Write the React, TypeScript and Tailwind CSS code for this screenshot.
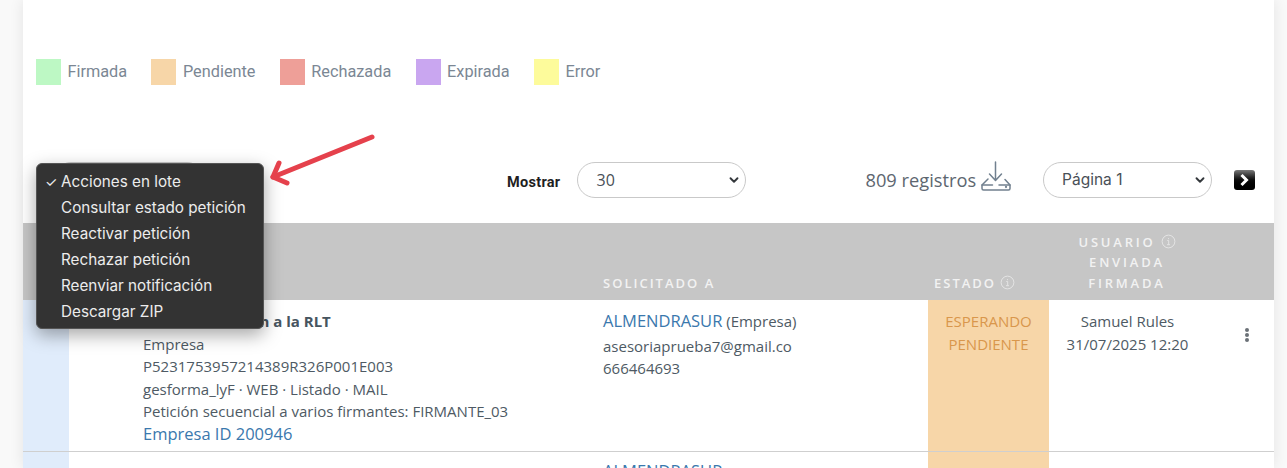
import { ChevronDown } from "lucide-react"

const legend = [
  { label: "Firmada", color: "bg-[#bdf8c4]" },
  { label: "Pendiente", color: "bg-[#f7d6a8]" },
  { label: "Rechazada", color: "bg-[#ee9f98]" },
  { label: "Expirada", color: "bg-[#c9a6f0]" },
  { label: "Error", color: "bg-[#fdfb9b]" },
]

const menuItems = [
  "Acciones en lote",
  "Consultar estado petición",
  "Reactivar petición",
  "Rechazar petición",
  "Reenviar notificación",
  "Descargar ZIP",
]

const InfoIcon = () => (
  <svg width="15" height="15" viewBox="0 0 16 16" fill="none" stroke="#eeeeee" className="shrink-0 opacity-80">
    <circle cx="8" cy="8" r="6.8" strokeWidth="1" />
    <path d="M6.6 7h1.6v4.2M6.4 11.4h3.2M8 4.4v1.1" strokeWidth="1" />
  </svg>
)

const DownloadIcon = () => (
  <svg width="32" height="32" viewBox="0 0 32 32" fill="none" stroke="#71808f" strokeWidth="1.5" strokeLinecap="round" strokeLinejoin="round">
    <path d="M15.5 2v18M9.5 14l6 6.5 6-6.5" />
    <path d="M8 19l-6 6v3.5a1.5 1.5 0 0 0 1.5 1.5h25a1.5 1.5 0 0 0 1.5-1.5V25l-5-5.5" />
    <path d="M2 25h10.5M19 25h11" />
    <circle cx="26" cy="27" r="0.4" />
  </svg>
)

const Pill = ({ value, className }: { value: string; className: string }) => (
  <div className={`flex h-[36px] w-[169px] shrink-0 items-center justify-between rounded-full border border-[#c9c9c9] bg-white pr-[4px] text-[#495057] ${className}`}>
    <span>{value}</span>
    <ChevronDown size={14} strokeWidth={3.2} className="text-[#33373b]" />
  </div>
)

const Row = ({ title, second }: { title: string; second?: boolean }) => (
  <div className="grid h-[152px] grid-cols-[46px_534px_325px_121px_151px_74px] border-b border-[#cfcfcf] font-['Open_Sans',sans-serif] text-[15px] leading-[22.5px] text-[#4e5a64]">
    <div className="bg-[#e0ecfb]" />
    <div className={second ? "pl-[119px] pt-[10px]" : "pl-[74px] pt-[10px]"}>
      <p className="font-bold text-[#47555f]">{title}</p>
      {!second && (
        <>
          <p>Empresa</p>
          <p>P5231753957214389R326P001E003</p>
          <p>gesforma_lyF · WEB · Listado · MAIL</p>
          <p>Petición secuencial a varios firmantes: FIRMANTE_03</p>
          <p className="text-[16.5px] text-[#3a78ad]">Empresa ID 200946</p>
        </>
      )}
    </div>
    <div className={second ? "pt-[8px]" : "pt-[10px]"}>
      <p>
        <span className="text-[16.5px] text-[#3a78ad]">ALMENDRASUR</span>
        {!second && " (Empresa)"}
      </p>
      {!second && (
        <>
          <p className="mt-[2px]">asesoriaprueba7@gmail.co</p>
          <p>666464693</p>
        </>
      )}
    </div>
    <div className="bg-[#f7d6a8] pt-[10px] text-center text-[#d9974c]">
      {!second && (
        <>
          <p>ESPERANDO</p>
          <p>PENDIENTE</p>
        </>
      )}
    </div>
    <div className="pl-[6px] pt-[10px] text-center">
      <p>Samuel Rules</p>
      {!second && <p>31/07/2025 12:20</p>}
    </div>
    <div className="flex justify-center pt-[28px] pl-[20px]">
      <div className="flex h-[14px] flex-col justify-between">
        <span className="size-[4px] rounded-full bg-[#6b7177]" />
        <span className="size-[4px] rounded-full bg-[#6b7177]" />
        <span className="size-[4px] rounded-full bg-[#6b7177]" />
      </div>
    </div>
  </div>
)

export default function App() {
  return (
    <div className="relative flex h-[468px] w-[1287px] overflow-hidden bg-[#f9f9f9] font-['Roboto',sans-serif]">
      <div className="ml-[23px] w-[1251px] shrink-0 bg-white shadow-[0_0_14px_rgba(0,0,0,0.09)]">
        <div className="flex gap-[24.3px] pl-[13px] pt-[59px]">
          {legend.map((item) => (
            <div key={item.label} className="flex items-center gap-[6.5px] text-[16.3px] text-[#7b8794]">
              <span className={`h-[26px] w-[25px] ${item.color}`} />
              <span className="pt-[1px]">{item.label}</span>
            </div>
          ))}
        </div>

        <div className="mt-[77px] flex h-[36px] items-center pl-[30px]">
          <div className="h-[36px] w-[152px] shrink-0 rounded-full border border-[#c9c9c9]" />
          <span className="ml-[302px] mt-[6px] text-[14.5px] font-bold tracking-[0.3px] text-[#1f1f1f]">Mostrar</span>
          <Pill value="30" className="ml-[17px] pl-[18px] font-['Open_Sans',sans-serif] text-[16px]" />
          <span className="ml-[119px] font-['Open_Sans',sans-serif] text-[18.25px] text-[#5d6670]">809 registros</span>
          <div className="ml-[4px] -mt-[8px]">
            <DownloadIcon />
          </div>
          <Pill value="Página 1" className="ml-[31px] pl-[18px] font-['Inter',sans-serif] text-[15.5px]" />
          <div className="ml-[22px] flex h-[20px] w-[21px] items-center justify-center rounded-[3px] bg-gradient-to-b from-[#7a7a7a] via-[#0b0b0b] to-black">
            <svg width="13" height="14" viewBox="0 0 13 14" fill="none" stroke="white" strokeWidth="3">
              <path d="M3.5 2L8.5 7l-5 5" />
            </svg>
          </div>
        </div>

        <div className="mt-[25px] grid h-[77px] grid-cols-[580px_325px_121px_151px_74px] items-end bg-[#c6c6c6] pb-[7px] font-['Open_Sans',sans-serif] text-[13px] font-semibold leading-[20.5px] tracking-[2px] text-[#f2f2f2]">
          <div />
          <div>SOLICITADO A</div>
          <div className="flex items-center gap-[4px] pl-[6px]">
            ESTADO <InfoIcon />
          </div>
          <div className="pl-[5px] text-center tracking-[2.8px]">
            <div className="flex items-center justify-center gap-[5px]">
              USUARIO <InfoIcon />
            </div>
            <div>ENVIADA</div>
            <div>FIRMADA</div>
          </div>
          <div />
        </div>

        <Row title="Actas de reunión a la RLT" />
        <Row title="Información" second />
      </div>

      <div className="absolute left-[36px] top-[163px] w-[228px] rounded-[6px] border border-[#555] bg-[#333333] pt-[5px] pb-[3px] font-['Inter',sans-serif] text-[15.25px] leading-[26px] text-[#ececec] shadow-[0_6px_18px_rgba(0,0,0,0.35)]">
        {menuItems.map((item, i) => (
          <div key={item} className="relative pl-[24px]">
            {i === 0 && <span className="absolute left-[8px] text-[14px]">✓</span>}
            {item}
          </div>
        ))}
      </div>

      <svg width="120" height="70" viewBox="0 0 120 70" fill="none" stroke="#e5414c" strokeWidth="5" strokeLinecap="round" strokeLinejoin="round" className="absolute left-[262px] top-[125px]">
        <path d="M110 12L11 52" />
        <path d="M17 38L11 52l14 6" />
      </svg>
    </div>
  )
}
